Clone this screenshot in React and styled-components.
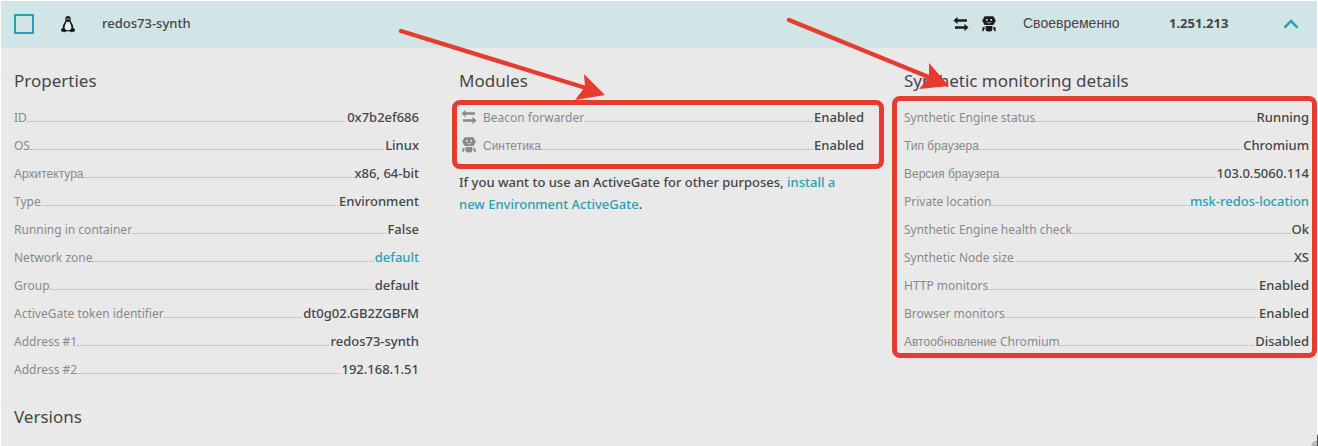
import React, { useState } from 'react'
import styled, { createGlobalStyle, css } from 'styled-components'

const GlobalStyle = createGlobalStyle`
    body {
        margin: 0;
        background: #fff;
    }
`

const Page = styled.main`
    position: relative;
    min-height: 100vh;
    box-sizing: border-box;
    border: 1px solid #fff;
    border-bottom: 0;
    background: #e9e9e9;
    color: #454646;
    font-family: 'Noto Sans', 'Liberation Sans', sans-serif;
    font-size: 13px;
`

const cyrillic = css`
    font-family: 'Liberation Sans', sans-serif;
`

const Header = styled.header`
    display: flex;
    align-items: center;
    box-sizing: border-box;
    height: 47px;
    padding: 0 18px 2px 13px;
    background: #d1e4e6;
`

const Checkbox = styled.input`
    appearance: none;
    width: 20px;
    height: 20px;
    margin: 0 26px 0 0;
    border: 2px solid #2ba1b1;
    &:checked {
        background: #2ba1b1;
    }
`

const Name = styled.label`
    flex: 1;
    margin-left: 26px;
    padding-bottom: 2px;
    font-weight: 500;
`

const HeaderIcons = styled.span`
    display: flex;
    gap: 12px;
    margin-right: 26px;
    color: #1c1c1c;
`

const Status = styled.span`
    ${cyrillic}
    width: 146px;
    padding-bottom: 2px;
    font-size: 14px;
`

const Version = styled.strong`
    width: 114px;
    padding-bottom: 2px;
    font-weight: 700;
`

const Toggle = styled.button`
    display: flex;
    padding: 0;
    border: 0;
    background: none;
    color: #2ba1b1;
    cursor: pointer;
`

const Details = styled.div`
    display: grid;
    grid-template-columns: repeat(3, 1fr);
    gap: 40px;
    padding: 21px 8px 0 13px;
`

const Column = styled.section`
    position: relative;
`

const Title = styled.h2`
    margin: 0 0 10px;
    font-size: 17px;
    font-weight: 400;
    line-height: 24px;
`

const Versions = styled(Title)`
    margin: 22px 0 0;
`

const List = styled.dl`
    position: relative;
    margin: 0;
`

const Row = styled.div`
    display: flex;
    align-items: baseline;
    height: 28px;
    line-height: 28px;
    &::before {
        content: '';
        order: 1;
        flex: 1;
        margin-right: 1px;
        border-bottom: 1px dotted #b0b0b0;
    }
`

const Label = styled.dt`
    color: #898989;
    font-size: 12px;
    svg {
        margin: 0 6px 0 2px;
        vertical-align: -3px;
    }
`

const Ru = styled.span`
    ${cyrillic}
`

const Value = styled.dd`
    order: 2;
    margin: 0;
    font-weight: 500;
`

const Link = styled.a`
    color: #2ba1b1;
    text-decoration: none;
`

const Note = styled.p`
    margin: 12px 0 0;
    padding-right: 20px;
    font-weight: 500;
    line-height: 22px;
`

// red frame drawn over a list
const Frame = styled.span`
    position: absolute;
    inset: ${props => props.$inset};
    border: 5px solid #e63c30;
    border-radius: 8px;
    pointer-events: none;
`

const ArrowSvg = styled.svg`
    position: absolute;
    z-index: 1;
    top: ${props => props.$top};
    left: ${props => props.$left};
    pointer-events: none;
`

const Corner = styled.svg`
    position: absolute;
    right: -1px;
    bottom: 0;
`

const TuxIcon = () => (
    <svg width="16" height="18" viewBox="0 0 16 18" aria-hidden="true">
        <path fill="#1c1c1c" d="M8 1C6.200 1 5.200 2.200 5.300 4c.1 1.600.1 2.300-.8 3.600C3.500 9.200 2.600 10.800 2.700 13L1 14.500v1.800l3.500 1 2-1h3l2 1 3.500-1v-1.800L13.300 13c.1-2.200-.8-3.800-1.800-5.400-.9-1.300-.9-2-.8-3.600C10.800 2.200 9.800 1 8 1z" />
        <path fill="#e3eeef" d="M6.600 6.500 8 7.200l1.400-.7c.4 1.500 2.100 3.700 2 6.200-.1 1.500-1.300 2.500-3.400 2.500s-3.300-1-3.400-2.500c-.1-2.500 1.600-4.700 2-6.200z" />
        <path fill="#b9c6c8" d="M6.500 3.300h1v1.400h-1zM8.500 3.300h1v1.400h-1z" />
    </svg>
)

const SwapIcon = () => (
    <svg width="16" height="16" viewBox="0 0 16 16" fill="currentColor" aria-hidden="true">
        <path d="M.5 4.500 4.500.8v2.500h9.500v2.400H4.500v2.500zM15.500 11.500l-4 3.700v-2.500H2v-2.400h9.500V7.800z" />
    </svg>
)

const RobotIcon = () => (
    <svg width="16" height="16" viewBox="0 0 16 16" fill="currentColor" aria-hidden="true">
        <path fillRule="evenodd" d="M4.500.3h7a2 2 0 0 1 2 2v1h1v2.900h-1v.8a2 2 0 0 1-2 2h-7a2 2 0 0 1-2-2v-.8h-1V3.300h1v-1a2 2 0 0 1 2-2zM5 3v1.700h1.600V3zM9.400 3v1.700H11V3zM5.200 6c1 1.700 4.600 1.700 5.600 0-1.400.7-4.200.7-5.600 0z" />
        <path d="M4.600 10h6.800v3a2.500 2.500 0 0 1-2.500 2.500H7.100A2.500 2.500 0 0 1 4.600 13zM1.300 13.200a2.200 2.200 0 0 1 2.300-2.400v2.200L2.400 15.300H1.300zM14.700 13.200a2.200 2.200 0 0 0-2.300-2.400v2.200l1.200 2.300h1.100z" />
    </svg>
)

const ChevronIcon = () => (
    <svg width="16" height="10" viewBox="0 0 16 10" fill="none" stroke="currentColor" strokeWidth="2.600" aria-hidden="true">
        <path d="M1.500 8.700 8 2.200l6.500 6.500" />
    </svg>
)

const Arrow = ({ top, left, width, height, line, head }) => (
    <ArrowSvg $top={top} $left={left} width={width} height={height} aria-hidden="true">
        <path d={line} stroke="#e63c30" strokeWidth="4.400" strokeLinecap="round" />
        <path d={head} fill="#e63c30" />
    </ArrowSvg>
)

const properties = [
    { label: 'ID', value: '0x7b2ef686' },
    { label: 'OS', value: 'Linux' },
    { label: <Ru>Архитектура</Ru>, value: 'x86, 64-bit' },
    { label: 'Type', value: 'Environment' },
    { label: 'Running in container', value: 'False' },
    { label: 'Network zone', value: 'default', link: true },
    { label: 'Group', value: 'default' },
    { label: 'ActiveGate token identifier', value: 'dt0g02.GB2ZGBFM' },
    { label: 'Address #1', value: 'redos73-synth' },
    { label: 'Address #2', value: '192.168.1.51' },
]

const modules = [
    { label: <><SwapIcon />Beacon forwarder</>, value: 'Enabled' },
    { label: <><RobotIcon /><Ru>Синтетика</Ru></>, value: 'Enabled' },
]

const synthetic = [
    { label: 'Synthetic Engine status', value: 'Running' },
    { label: <Ru>Тип браузера</Ru>, value: 'Chromium' },
    { label: <Ru>Версия браузера</Ru>, value: '103.0.5060.114' },
    { label: 'Private location', value: 'msk-redos-location', link: true },
    { label: 'Synthetic Engine health check', value: 'Ok' },
    { label: 'Synthetic Node size', value: 'XS' },
    { label: 'HTTP monitors', value: 'Enabled' },
    { label: 'Browser monitors', value: 'Enabled' },
    { label: <><Ru>Автообновление</Ru> Chromium</>, value: 'Disabled' },
]

const DetailList = ({ items, children }) => (
    <List>
        {items.map((item, i) => (
            <Row key={i}>
                <Label>{item.label}</Label>
                <Value>{item.link ? <Link href="#">{item.value}</Link> : item.value}</Value>
            </Row>
        ))}
        {children}
    </List>
)

export default function App() {
    const [open, setOpen] = useState(true)

    return (
        <Page>
            <GlobalStyle />
            <Header>
                <Checkbox type="checkbox" id="gate" />
                <TuxIcon />
                <Name htmlFor="gate">redos73-synth</Name>
                <HeaderIcons><SwapIcon /><RobotIcon /></HeaderIcons>
                <Status>Своевременно</Status>
                <Version>1.251.213</Version>
                <Toggle type="button" aria-label="Toggle details" aria-expanded={open} onClick={() => setOpen(!open)}>
                    <ChevronIcon />
                </Toggle>
            </Header>
            {open && (
                <Details>
                    <Column>
                        <Title>Properties</Title>
                        <DetailList items={properties} />
                        <Versions>Versions</Versions>
                    </Column>
                    <Column>
                        <Title>Modules</Title>
                        <DetailList items={modules}>
                            <Frame $inset="-3px -20px -10px -7px" />
                        </DetailList>
                        <Note>
                            If you want to use an ActiveGate for other purposes, <Link href="#">install a new Environment ActiveGate</Link>.
                        </Note>
                        <Arrow
                            top="-41px" left="-61px" width="210" height="76"
                            line="M3 3 188 60" head="M207 67 186 46 187 59 177 72z"
                        />
                    </Column>
                    <Column>
                        <Title>Synthetic monitoring details</Title>
                        <DetailList items={synthetic}>
                            <Frame $inset="-7px -8px -3px -12px" />
                        </DetailList>
                        <Arrow
                            top="-52px" left="-118px" width="170" height="76"
                            line="M3 3 145 61" head="M163 69 143 46 143 60 133 72z"
                        />
                    </Column>
                </Details>
            )}
            <Corner width="7" height="11" viewBox="0 0 7 11" aria-hidden="true">
                <path d="M1 11a5 5 0 0 1 5-5v5z" fill="#c4c4c4" stroke="#a8a8a8" />
                <path d="M6 0h1v11H6z" fill="#555" />
            </Corner>
        </Page>
    )
}
